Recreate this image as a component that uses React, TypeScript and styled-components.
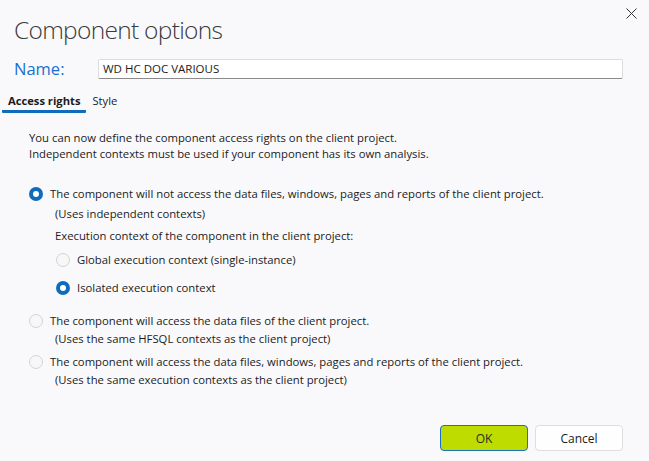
import React from "react";
import styled, { createGlobalStyle } from "styled-components";

const FONT = `"Open Sans", "Noto Sans", "Liberation Sans", sans-serif`;

const Global = createGlobalStyle`
  html, body { margin: 0; padding: 0; background: #f9f9fb; }
  body { font-family: ${FONT}; color: #1b1b1b; }
  * { box-sizing: border-box; }
`;

const Dialog = styled.div`
  width: 649px;
  height: 461px;
  background: #f9f9fb;
  display: flex;
  flex-direction: column;
  overflow: hidden;
`;

const Header = styled.div`
  display: flex;
  justify-content: space-between;
  align-items: flex-start;
  padding: 0 0 0 14px;
`;

const Title = styled.h1`
  margin: 12px 0 0 0;
  font-family: ${FONT};
  font-weight: 300;
  font-size: 24.5px;
  letter-spacing: -0.7px;
  line-height: 36px;
  color: #3a3a3a;
`;

const CloseButton = styled.button`
  width: 30px;
  height: 26px;
  margin: 0 3px 0 0;
  border: none;
  background: transparent;
  display: flex;
  align-items: center;
  justify-content: center;
  padding: 0;
`;

const NameRow = styled.div`
  display: flex;
  align-items: center;
  padding: 0 26px 0 14px;
  margin-top: 11px;
`;

const NameLabel = styled.label`
  width: 84px;
  font-size: 16.5px;
  color: #1a6fcf;
  line-height: 20px;
`;

const NameInput = styled.div`
  flex: 1;
  height: 20px;
  background: #fefffe;
  border: 1px solid #dcdcdc;
  border-bottom: 1px solid #8a8a8a;
  border-radius: 2px;
  font-size: 11.5px;
  line-height: 18px;
  padding-left: 4px;
  color: #1b1b1b;
`;

const Tabs = styled.div`
  display: flex;
  align-items: flex-end;
  gap: 0;
  padding-left: 2px;
  margin-top: 14px;
`;

const Tab = styled.div<{ $active?: boolean }>`
  font-size: 11.2px;
  font-weight: ${(p) => (p.$active ? 700 : 400)};
  line-height: 16px;
  padding: 0 6px 1px 6px;
  border-bottom: 3px solid ${(p) => (p.$active ? "#0f6cbd" : "transparent")};
  border-radius: 1px;
  color: #1b1b1b;
`;

const Body = styled.div`
  padding: 17px 20px 0 29px;
  display: flex;
  flex-direction: column;
  font-size: 11.3px;
  line-height: 16px;
`;

const Paragraph = styled.p`
  margin: 0 0 24px 0;
`;

const RadioRow = styled.div<{ $indent?: number; $top?: number }>`
  display: flex;
  align-items: center;
  gap: 7px;
  margin-left: ${(p) => p.$indent ?? 0}px;
  margin-top: ${(p) => p.$top ?? 0}px;
`;

const Radio = styled.span<{ $checked?: boolean }>`
  width: 14px;
  height: 14px;
  flex: none;
  border-radius: 50%;
  background: ${(p) => (p.$checked ? "#0f6cbd" : "#f7f7f7")};
  border: ${(p) => (p.$checked ? "none" : "1px solid #d4d4d4")};
  display: flex;
  align-items: center;
  justify-content: center;
  &::after {
    content: "";
    display: ${(p) => (p.$checked ? "block" : "none")};
    width: 6px;
    height: 6px;
    border-radius: 50%;
    background: #ffffff;
  }
`;

const Option = styled.div<{ $gapAfter?: number }>`
  display: flex;
  flex-direction: column;
  margin-bottom: ${(p) => p.$gapAfter ?? 0}px;
`;

const SubText = styled.div<{ $top?: number }>`
  margin-left: 26px;
  margin-top: ${(p) => p.$top ?? 0}px;
`;

const Footer = styled.div`
  margin-top: auto;
  display: flex;
  justify-content: flex-end;
  gap: 7px;
  padding: 0 26px 10px 0;
`;

const Button = styled.button<{ $primary?: boolean }>`
  width: 88px;
  height: 26px;
  border-radius: 4px;
  font-family: ${FONT};
  font-size: 12px;
  color: ${(p) => (p.$primary ? "#2b2b2b" : "#1b1b1b")};
  background: ${(p) => (p.$primary ? "#bedc00" : "#fefefe")};
  border: 1px solid ${(p) => (p.$primary ? "#1a6fc9" : "#dedede")};
  padding: 0;
`;

export default function App() {
  return (
    <Dialog>
      <Global />
      <Header>
        <Title>Component options</Title>
        <CloseButton aria-label="Close">
          <svg width="11" height="11" viewBox="0 0 11 11">
            <path d="M0.5 0.5 L10.5 10.5 M10.5 0.5 L0.5 10.5" stroke="#333" strokeWidth="1" />
          </svg>
        </CloseButton>
      </Header>
      <NameRow>
        <NameLabel>Name:</NameLabel>
        <NameInput>WD HC DOC VARIOUS</NameInput>
      </NameRow>
      <Tabs>
        <Tab $active>Access rights</Tab>
        <Tab>Style</Tab>
      </Tabs>
      <Body>
        <Paragraph>
          You can now define the component access rights on the client project.
          <br />
          Independent contexts must be used if your component has its own analysis.
        </Paragraph>
        <Option $gapAfter={17}>
          <RadioRow>
            <Radio $checked />
            <span>The component will not access the data files, windows, pages and reports of the client project.</span>
          </RadioRow>
          <SubText $top={4}>(Uses independent contexts)</SubText>
          <SubText $top={6}>Execution context of the component in the client project:</SubText>
          <RadioRow $indent={27} $top={8}>
            <Radio />
            <span>Global execution context (single-instance)</span>
          </RadioRow>
          <RadioRow $indent={27} $top={12}>
            <Radio $checked />
            <span>Isolated execution context</span>
          </RadioRow>
        </Option>
        <Option $gapAfter={7}>
          <RadioRow>
            <Radio />
            <span>The component will access the data files of the client project.</span>
          </RadioRow>
          <SubText $top={2}>(Uses the same HFSQL contexts as the client project)</SubText>
        </Option>
        <Option>
          <RadioRow>
            <Radio />
            <span>The component will access the data files, windows, pages and reports of the client project.</span>
          </RadioRow>
          <SubText $top={2}>(Uses the same execution contexts as the client project)</SubText>
        </Option>
      </Body>
      <Footer>
        <Button $primary>OK</Button>
        <Button>Cancel</Button>
      </Footer>
    </Dialog>
  );
}
